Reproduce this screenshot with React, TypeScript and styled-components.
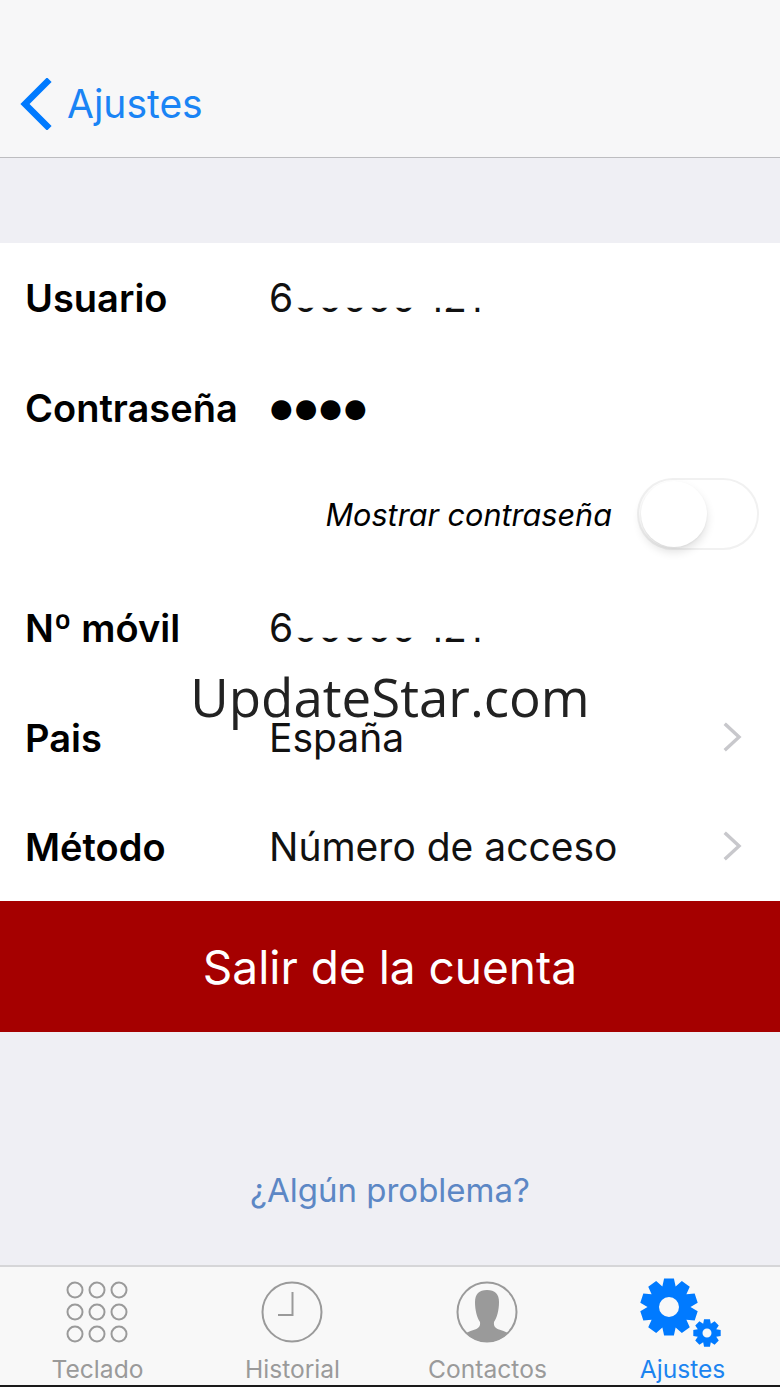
import React from "react";
import styled, { createGlobalStyle } from "styled-components";

const GlobalStyle = createGlobalStyle`
  html, body {
    margin: 0;
    padding: 0;
    background: #efeff4;
  }
  * {
    box-sizing: border-box;
  }
`;

const Screen = styled.div`
  position: relative;
  display: flex;
  flex-direction: column;
  width: 780px;
  height: 1387px;
  overflow: hidden;
  background: #efeff4;
  font-family: Inter, "Liberation Sans", sans-serif;
  color: #000;
`;

const NavBar = styled.header`
  display: flex;
  align-items: center;
  gap: 15px;
  height: 158px;
  padding: 50px 0 0 18px;
  background: #f7f7f8;
  border-bottom: 1px solid #bdbdc0;
`;

const NavTitle = styled.span`
  font-size: 39px;
  color: #1a84f5;
`;

const Form = styled.section`
  margin-top: 85px;
  background: #fff;
`;

const Row = styled.div<{ $h?: number }>`
  display: grid;
  grid-template-columns: 244px 1fr auto;
  align-items: center;
  height: ${(p) => p.$h ?? 110}px;
  padding: 0 38px 0 25px;
`;

const Label = styled.span`
  font-size: 38px;
  font-weight: 600;
`;

const Value = styled.span`
  padding-bottom: 2px;
  font-size: 39px;
  color: #111;
`;

const Masked = styled.span`
  clip-path: inset(73% 0 0 0);
`;

const Dots = styled.span`
  font-family: "DejaVu Sans", sans-serif;
  font-size: 26px;
  letter-spacing: 2px;
  margin-left: 1px;
`;

const ToggleRow = styled.div`
  display: flex;
  align-items: center;
  justify-content: flex-end;
  gap: 25px;
  height: 110px;
  padding: 0 21px 8px 0;
`;

const ToggleLabel = styled.span`
  font-size: 30.6px;
  font-style: italic;
`;

const Track = styled.span`
  display: flex;
  align-items: center;
  width: 122px;
  height: 72px;
  padding: 0 2px;
  border: 2px solid #f1f1f1;
  border-radius: 36px;
  background: #fff;
`;

const Knob = styled.span`
  width: 66px;
  height: 66px;
  border-radius: 50%;
  background: #fff;
  box-shadow: 0 5px 10px rgba(0, 0, 0, 0.12), 0 1px 2px rgba(0, 0, 0, 0.05);
`;

const LogoutButton = styled.button`
  display: block;
  width: 100%;
  height: 131px;
  border: 0;
  background: #a50000;
  color: #fff;
  font-family: inherit;
  font-size: 46px;
`;

const HelpArea = styled.div`
  flex: 1;
  display: flex;
  justify-content: center;
  align-items: flex-end;
  padding-bottom: 55px;
`;

const HelpLink = styled.a`
  font-size: 33px;
  color: #5c87c5;
`;

const TabBar = styled.nav`
  display: grid;
  grid-template-columns: repeat(4, 1fr);
  height: 122px;
  background: #f8f8f8;
  border-top: 2px solid #d6d6d8;
  border-bottom: 2px solid #1a1a1a;
`;

const Tab = styled.div<{ $active?: boolean }>`
  display: flex;
  flex-direction: column;
  align-items: center;
  padding-top: 9px;
  font-size: 24.6px;
  line-height: 30px;
  color: ${(p) => (p.$active ? "#1c84f0" : "#9a9a9a")};
`;

const TabIcon = styled.svg`
  display: block;
  width: 100px;
  height: 72px;
  margin: 0 2px 6px 0;
  overflow: visible;
`;

const Watermark = styled.div`
  position: absolute;
  top: 662px;
  left: 0;
  width: 100%;
  text-align: center;
  font-family: "Open Sans", sans-serif;
  font-size: 52.8px;
  line-height: 70px;
  color: #222;
`;

const ChevronIcon = styled.svg`
  display: block;
  width: 19px;
  height: 30px;
  margin-bottom: 2px;
`;

const Chevron = () => (
  <ChevronIcon viewBox="0 0 20 32">
    <path d="M3 3 L17 16 L3 29" fill="none" stroke="#c8c8cc" strokeWidth={3.6} strokeLinecap="square" />
  </ChevronIcon>
);

const BackArrow = () => (
  <svg width="34" height="52" viewBox="0 0 34 52">
    <path d="M29 4 L7 26 L29 48" fill="none" stroke="#007aff" strokeWidth="6.5" strokeLinecap="square" />
  </svg>
);

// teeth of a cog, built around its center
const gearPath = (cx: number, cy: number, outer: number, inner: number, hole: number, teeth: number) => {
  const step = (Math.PI * 2) / teeth;
  const pts: string[] = [];
  for (let i = 0; i < teeth; i++) {
    const a = i * step - Math.PI / 2;
    [
      [inner, -0.5],
      [outer, -0.27],
      [outer, 0.27],
      [inner, 0.5],
    ].forEach(([r, k]) => {
      pts.push(`${(cx + r * Math.cos(a + k * step)).toFixed(2)} ${(cy + r * Math.sin(a + k * step)).toFixed(2)}`);
    });
  }
  return `M${pts.join("L")}Z M${cx - hole} ${cy}a${hole} ${hole} 0 1 0 ${hole * 2} 0a${hole} ${hole} 0 1 0 ${-hole * 2} 0Z`;
};

const KeypadIcon = () => (
  <TabIcon viewBox="0 0 100 72">
    {[0, 1, 2].flatMap((r) =>
      [0, 1, 2].map((c) => (
        <circle key={`${r}-${c}`} cx={28 + c * 22} cy={14 + r * 22} r={7.5} fill="none" stroke="#9a9a9a" strokeWidth={2} />
      ))
    )}
  </TabIcon>
);

const ClockIcon = () => (
  <TabIcon viewBox="0 0 100 72">
    <circle cx={50} cy={36} r={29.5} fill="none" stroke="#9a9a9a" strokeWidth={2} />
    <path d="M50.5 16 V39 H36" fill="none" stroke="#9a9a9a" strokeWidth={2} />
  </TabIcon>
);

const ContactIcon = () => (
  <TabIcon viewBox="0 0 100 72">
    <circle cx={50} cy={36} r={29.5} fill="none" stroke="#9a9a9a" strokeWidth={2} />
    <path
      d="M50 14 C58 14 62 18 62 26 C62 34 60 42 57 46 C56.500 50 58 52 62 53.500 C65 54.500 68 55.500 71 57 A29 29 0 0 1 29 57 C32 55.500 35 54.500 38 53.500 C42 52 43.500 50 43 46 C40 42 38 34 38 26 C38 18 42 14 50 14 Z"
      fill="#9a9a9a"
    />
  </TabIcon>
);

const GearsIcon = () => (
  <TabIcon viewBox="0 0 100 72">
    <path fillRule="evenodd" fill="#007aff" d={gearPath(37, 31, 29, 21.5, 10, 10)} />
    <path fillRule="evenodd" fill="#007aff" d={gearPath(75, 57, 14, 10, 4.5, 8)} />
  </TabIcon>
);

const MaskedNumber = () => (
  <Value>
    6<Masked>00000 121</Masked>
  </Value>
);

export default function App() {
  return (
    <Screen>
      <GlobalStyle />
      <NavBar>
        <BackArrow />
        <NavTitle>Ajustes</NavTitle>
      </NavBar>

      <Form>
        <Row>
          <Label>Usuario</Label>
          <MaskedNumber />
        </Row>
        <Row>
          <Label>Contraseña</Label>
          <Dots>●●●●</Dots>
        </Row>
        <ToggleRow>
          <ToggleLabel>Mostrar contraseña</ToggleLabel>
          <Track>
            <Knob />
          </Track>
        </ToggleRow>
        <Row>
          <Label>Nº móvil</Label>
          <MaskedNumber />
        </Row>
        <Row>
          <Label>Pais</Label>
          <Value>España</Value>
          <Chevron />
        </Row>
        <Row $h={108}>
          <Label>Método</Label>
          <Value>Número de acceso</Value>
          <Chevron />
        </Row>
      </Form>

      <LogoutButton>Salir de la cuenta</LogoutButton>

      <HelpArea>
        <HelpLink>¿Algún problema?</HelpLink>
      </HelpArea>

      <TabBar>
        <Tab>
          <KeypadIcon />
          Teclado
        </Tab>
        <Tab>
          <ClockIcon />
          Historial
        </Tab>
        <Tab>
          <ContactIcon />
          Contactos
        </Tab>
        <Tab $active>
          <GearsIcon />
          Ajustes
        </Tab>
      </TabBar>

      <Watermark>UpdateStar.com</Watermark>
    </Screen>
  );
}
